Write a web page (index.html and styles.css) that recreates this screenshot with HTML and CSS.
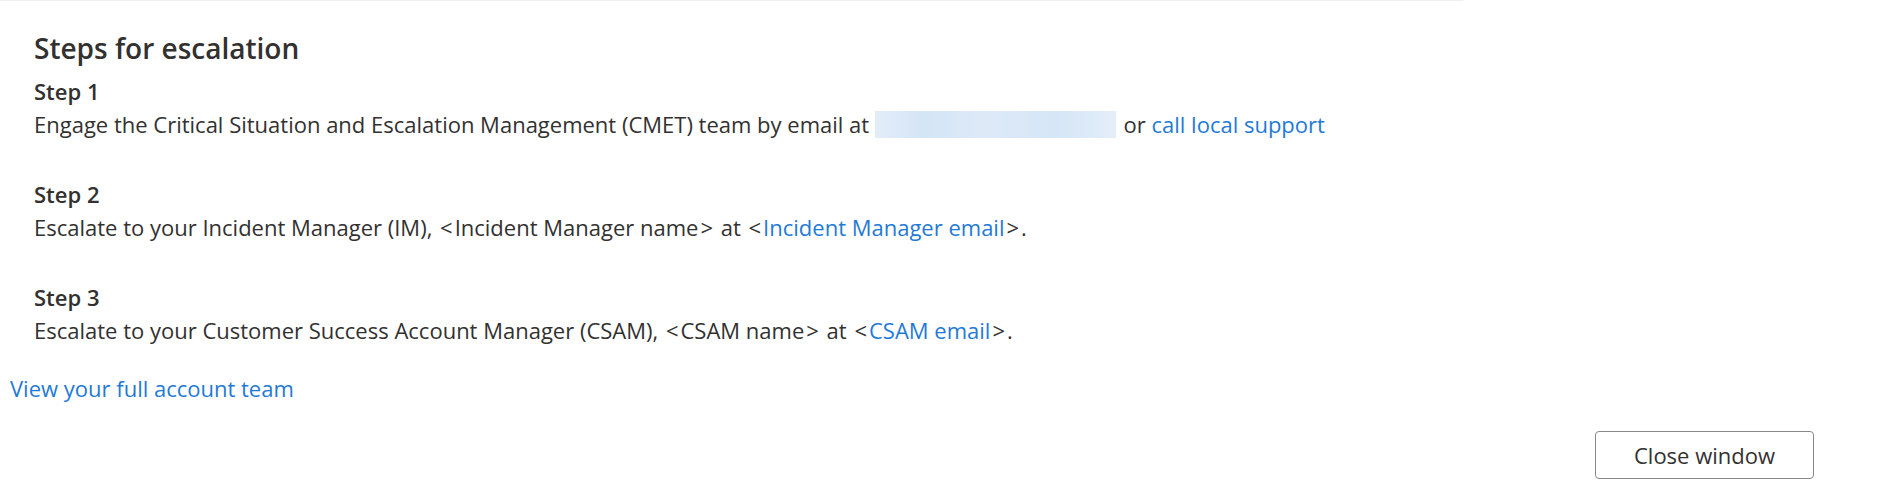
FILE: index.html
```html
<!DOCTYPE html>
<html lang="en">
<head>
<meta charset="utf-8">
<title>Steps for escalation</title>
<link rel="stylesheet" href="styles.css">
</head>
<body>
<div class="topline"></div>
<main class="panel">
  <section class="steps">
    <h2 class="title">Steps for escalation</h2>
    <div class="step">
      <div class="step-title">Step 1</div>
      <div class="step-text">Engage the Critical Situation and Escalation Management (CMET) team by email at <span class="redacted"></span> or <a class="link" href="#">call local support</a></div>
    </div>
    <div class="step">
      <div class="step-title">Step 2</div>
      <div class="step-text">Escalate to your Incident Manager (IM), <span class="ang">&lt;</span>Incident Manager name<span class="ang">&gt;</span> at <span class="ang">&lt;</span><a class="link" href="#">Incident Manager email</a><span class="ang">&gt;</span>.</div>
    </div>
    <div class="step">
      <div class="step-title">Step 3</div>
      <div class="step-text">Escalate to your Customer Success Account Manager (CSAM), <span class="ang">&lt;</span>CSAM name<span class="ang">&gt;</span> at <span class="ang">&lt;</span><a class="link" href="#">CSAM email</a><span class="ang">&gt;</span>.</div>
    </div>
  </section>
  <div class="team"><a class="link" href="#">View your full account team</a></div>
  <div class="actions"><button class="btn" type="button">Close window</button></div>
</main>
</body>
</html>
```
FILE: styles.css
```css
html, body {
  margin: 0;
  padding: 0;
  background: #ffffff;
}
body {
  font-family: "Open Sans", "Noto Sans", "Liberation Sans", sans-serif;
  color: #323130;
  width: 1883px;
  height: 488px;
  overflow: hidden;
}
.topline {
  width: 1463px;
  height: 1px;
  background: #f0f0f0;
}
.panel {
  padding-top: 29px;
}
.steps {
  padding-left: 34px;
}
.title {
  margin: 0 0 9px 0;
  font-size: 28px;
  line-height: 36px;
  font-weight: 600;
}
.step {
  margin-bottom: 37px;
}
.step:last-child {
  margin-bottom: 0;
}
.step-title {
  font-size: 22px;
  line-height: 33px;
  font-weight: 600;
}
.step-text {
  font-size: 22px;
  line-height: 33px;
  white-space: nowrap;
}
.ang {
  padding: 0 2px;
}
.redacted {
  display: inline-block;
  width: 241px;
  height: 27px;
  vertical-align: -5px;
  background: linear-gradient(90deg, #e3edf8 0%, #d4e5f6 20%, #dde9f7 45%, #d6e6f6 75%, #e3eef9 100%);
  margin-right: 2px;
}
.link {
  color: #1f7ad6;
  text-decoration: none;
}
.team {
  margin-top: 25px;
  padding-left: 10px;
  font-size: 22px;
  line-height: 33px;
}
.actions {
  display: flex;
  justify-content: flex-end;
  padding-right: 69px;
  margin-top: 26px;
}
.btn {
  width: 219px;
  height: 48px;
  box-sizing: border-box;
  border: 1px solid #8a8886;
  border-radius: 4px;
  background: #ffffff;
  color: #323130;
  font-family: "Open Sans", "Noto Sans", "Liberation Sans", sans-serif;
  font-size: 22px;
  font-weight: 500;
  padding: 0;
}
```
